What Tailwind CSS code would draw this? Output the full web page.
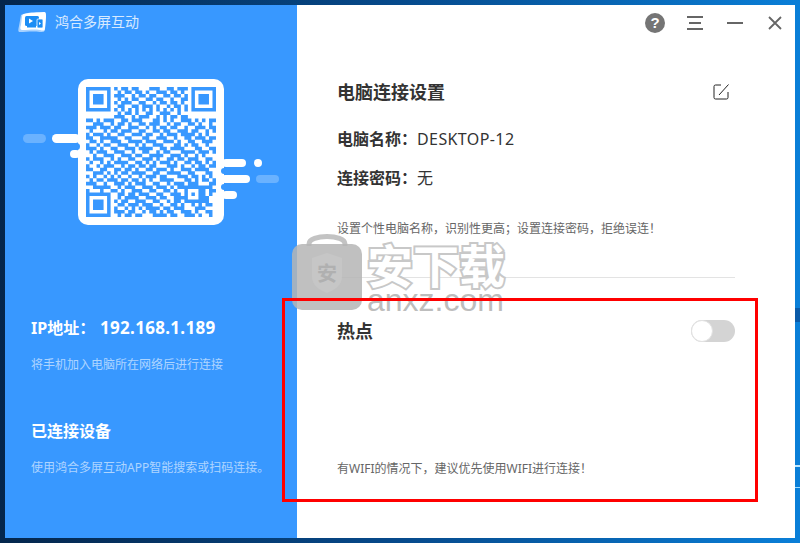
<!DOCTYPE html>
<html lang="zh">
<head>
    <meta charset="UTF-8">
    <title>鸿合多屏互动</title>
    <script src="https://cdn.jsdelivr.net/npm/@tailwindcss/browser@4"></script>
</head>
<body class="relative w-[800px] h-[543px] overflow-hidden p-[5px] bg-linear-to-r from-[#04264c] via-[#064a8c] to-[#0a7fd8] font-['Noto_Sans','Noto_Sans_CJK_SC',sans-serif]">
    <!-- desktop wallpaper streaks at the right edge -->
    <div class="absolute right-0 top-[465px] w-[5px] h-[2px] bg-[#bfe8ff]"></div>
    <div class="absolute right-0 top-[487px] w-[5px] h-[1px] bg-[#9fdcff]"></div>
    <div class="absolute right-0 top-[308px] w-[5px] h-[14px] bg-[#0a5aa8]"></div>

    <div class="flex w-[790px] h-[533px] bg-white">
        <!-- left panel -->
        <div class="w-[292px] h-full shrink-0 bg-[#3898ff]">
            <div class="h-[34px] pl-[13px] flex items-center gap-[9px]">
                <svg width="28" height="22" viewBox="0 0 28 22" class="shrink-0">
                    <path d="M3 4 C9 1 20 1 26 1 C28 1 28 3 28 6 L27 18 C27 21 25 21 22 21 C15 20 8 21 2 21 C0 21 0 19 1 15 Z" fill="#a8d2ff"/>
                    <path d="M6 3 C12 1 20 2 26 1 C28 1 28 3 28 6 L27 17 C27 20 25 20 22 19 C16 18 10 19 5 19 C2 19 2 17 3 14 L4 6 C4 4 5 3 6 3 Z" fill="#ffffff"/>
                    <rect x="7" y="5" width="14" height="10" rx="1.500" fill="#1b8df5"/>
                    <rect x="9" y="15" width="9" height="1.500" fill="#1b8df5"/>
                    <path d="M11 7.500 L15 10 L11 12.500 Z" fill="#ffffff"/>
                    <rect x="19" y="8" width="6" height="9" rx="1" fill="#1b8df5" stroke="#ffffff" stroke-width="0.8"/>
                    <path d="M21 11 L23 12.500 L21 14 Z" fill="#ffffff"/>
                </svg>
                <span class="text-[14px] leading-[20px] text-white/80">鸿合多屏互动</span>
            </div>

            <!-- QR card with its decoration -->
            <div class="relative mt-[40px] ml-[73px] w-[146px] h-[146px] rounded-[10px] bg-white flex items-center justify-center">
                <svg id="qr" width="130" height="130" viewBox="0 0 37 37"></svg>
                <div class="absolute left-[-26px] top-[55px] w-[28px] h-[9px] rounded-full bg-white"></div>
                <div class="absolute left-[-8px] top-[71px] w-[10px] h-[8px] rounded-full bg-white"></div>
                <div class="absolute left-[-6px] top-[64px] w-[8px] h-[7px] rounded-full bg-[#3898ff]"></div>
                <div class="absolute left-[-55px] top-[55px] w-[23px] h-[9px] rounded-full bg-white/25"></div>
                <div class="absolute left-[144px] top-[80px] w-[24px] h-[8px] rounded-full bg-white"></div>
                <div class="absolute left-[143px] top-[96px] w-[29px] h-[8px] rounded-full bg-white"></div>
                <div class="absolute left-[144px] top-[112px] w-[15px] h-[8px] rounded-full bg-white"></div>
                <div class="absolute left-[143px] top-[89px] w-[10px] h-[6px] rounded-full bg-[#3898ff]"></div>
                <div class="absolute left-[143px] top-[105px] w-[10px] h-[6px] rounded-full bg-[#3898ff]"></div>
                <div class="absolute left-[176px] top-[80px] w-[8px] h-[8px] rounded-full bg-white"></div>
                <div class="absolute left-[178px] top-[96px] w-[23px] h-[8px] rounded-full bg-white/25"></div>
            </div>

            <div class="pl-[26px]">
                <div class="mt-[91px] h-[24px] flex text-[16px] leading-[24px] font-bold text-white whitespace-nowrap"><span class="w-[69px]">IP地址：</span><span class="text-[17px] tracking-[0.3px]">192.168.1.189</span></div>
                <div class="mt-[16px] h-[18px] text-[12px] leading-[18px] text-white/60">将手机加入电脑所在网络后进行连接</div>
                <div class="mt-[45px] h-[24px] text-[16px] leading-[24px] font-bold text-white">已连接设备</div>
                <div class="mt-[16px] h-[18px] text-[12px] leading-[18px] text-white/60">使用鸿合多屏互动APP智能搜索或扫码连接。</div>
            </div>
        </div>

        <!-- right panel -->
        <div class="flex-1 pl-[40px] pr-[60px]">
            <div class="h-[34px] -mr-[47px] flex items-center justify-end pt-[2px]">
                <svg width="20" height="20" viewBox="0 0 20 20"><circle cx="10" cy="10" r="10" fill="#757575"/><text x="10" y="15" text-anchor="middle" font-size="15" font-weight="700" fill="#fff" font-family="Liberation Sans">?</text></svg>
                <svg width="16" height="14" viewBox="0 0 16 14" class="ml-[22px]"><path d="M0 1H16M2 7H14M0 13H16" stroke="#666" stroke-width="2"/></svg>
                <svg width="16" height="14" viewBox="0 0 16 14" class="ml-[24px]"><path d="M0 7H16" stroke="#666" stroke-width="2"/></svg>
                <svg width="14" height="14" viewBox="0 0 14 14" class="ml-[25px]"><path d="M1 1L13 13M13 1L1 13" stroke="#666" stroke-width="1.800"/></svg>
            </div>

            <div class="mt-[40px] h-[26px] flex items-center justify-between pr-[6px]">
                <h2 class="text-[18px] leading-[26px] font-bold text-[#333]">电脑连接设置</h2>
                <svg width="16" height="16" viewBox="0 0 16 16" fill="none" stroke="#222" stroke-width="1"><path d="M8 1H2.500A1.500 1.500 0 0 0 1 2.500V13.500A1.500 1.500 0 0 0 2.500 15H13.500A1.500 1.500 0 0 0 15 13.500V8"/><path d="M6 11L15.500 0.500"/></svg>
            </div>
            <div class="mt-[22px] h-[24px] flex text-[16px] leading-[24px] text-[#333]"><b class="w-[80px] font-bold">电脑名称：</b><span class="tracking-[0.4px]">DESKTOP-12</span></div>
            <div class="mt-[15px] h-[24px] flex text-[16px] leading-[24px] text-[#333]"><b class="w-[80px] font-bold">连接密码：</b><span>无</span></div>
            <p class="mt-[30px] h-[18px] text-[12px] leading-[18px] text-[#666] whitespace-nowrap">设置个性电脑名称，识别性更高；设置连接密码，拒绝误连！</p>
            <div class="mt-[39px] border-t border-[#e3e3e3]"></div>

            <div class="mt-[40px] h-[26px] flex items-center justify-between">
                <h2 class="text-[18px] leading-[26px] font-bold text-[#333]">热点</h2>
                <div class="w-[44px] h-[22px] rounded-full bg-[#d4d4d4]">
                    <div class="w-[22px] h-[22px] rounded-full bg-white border border-[#e2e2e2]"></div>
                </div>
            </div>
            <p class="mt-[116px] h-[18px] text-[12px] leading-[18px] text-[#666]">有WIFI的情况下，建议优先使用WIFI进行连接！</p>
        </div>
    </div>

    <!-- site watermark over the window -->
    <div class="absolute left-[292px] top-[230px] w-[216px] h-[86px] flex">
        <svg width="70" height="80" viewBox="0 0 70 80" class="shrink-0">
            <path d="M17 16 V14 C17 4 53 4 53 14 V16" fill="none" stroke="#bdbdbd" stroke-width="5" opacity="0.9"/>
            <rect x="0" y="14" width="70" height="66" rx="10" fill="#b5b5b5" fill-opacity="0.85"/>
            <path d="M20 28 L35 23 L50 28 V46 C50 56 42 60 35 63 C28 60 20 56 20 46 Z" fill="#c6c6c6"/>
            <text x="35" y="51" text-anchor="middle" font-size="20" font-weight="700" fill="#b0b0b0" font-family="Noto Sans CJK SC">安</text>
        </svg>
        <div class="ml-[5px] w-[141px] pt-[12px]">
            <div class="h-[46px] text-[46px] leading-[46px] font-bold whitespace-nowrap text-white [-webkit-text-stroke:4px_#c8c8c8] [paint-order:stroke_fill]">安下载</div>
            <div class="h-[24px] text-[32px] leading-[24px] text-[#bdbdbd] font-['Liberation_Sans',sans-serif]">anxz.com</div>
        </div>
    </div>

    <!-- red annotation box -->
    <div class="absolute left-[282px] top-[298px] w-[476px] h-[204px] border-[3px] border-[#ff0000]"></div>

    <script>
        // modules of the QR code, finder and alignment squares are added below
        const mid = [
            '01011011000111001101110',
            '00101101101001110110100',
            '01110010110110011011010',
            '00101011001101100100110',
            '01011100110010110110100',
            '00110011011101001011010',
            '01010101010101010101010',
            '00101101001100111001000',
            '01110010111001010110110'
        ];
        const rows = mid.map(m => '0000000' + m + '0000000');
        rows.push(
            '1101011100110111000110101001110101011',
            '0011100101101001101110010110011010010',
            '1110111011001110010101101100100111011',
            '0100010110111001100110110011101100101',
            '1011101001100111011001011101111010100',
            '1100111110011000110011100100110111011',
            '0110100111001111011100111010011001110',
            '1001011001110010100111000110101100100',
            '1110100110011101111001101111000110011',
            '0101110011100100110010110001111011101',
            '0010011100111011001111001110100101000',
            '1011100101001100111010011011011100110',
            '0100101011110011010101110100110110101',
            '1001011100101101101100011101001011011',
            '1100110011011010011011101001110111100',
            '0011101010110111100110011110011000110',
            '1010010101001001011101100011101101010',
            '0101101110110110101001111000110101101',
            '1110010011101011100110010111011100011',
            '0011111001011100111011101011100001110',
            '1000100110100111001100110100111111011'
        );
        for (const t of [
            '00110110111001100111000001101',
            '00101111001110110011100010110',
            '01011001110011001011011100110',
            '00110111011100100110100101011',
            '01001010101111011011100011100',
            '01110110010110101100111010011',
            '00101101100011110110011101001'
        ]) rows.push('0000000' + t);
        const isSet = (r, c) => rows[r] && rows[r][c] === '1';
        let d = '';
        const square = (x, y, w) => { d += `M${x} ${y}h${w}v${w}h${-w}z`; };
        const ring = (x, y, w) => { d += `M${x} ${y}h${w}v1h${-w}zM${x} ${y + w - 1}h${w}v1h${-w}zM${x} ${y + 1}h1v${w - 2}h-1zM${x + w - 1} ${y + 1}h1v${w - 2}h-1z`; };
        for (let r = 0; r < 37; r++) {
            for (let c = 0; c < 37; c++) {
                if (isSet(r, c) && !(r > 27 && r < 33 && c > 27 && c < 33)) square(c, r, 1);
            }
        }
        for (const [x, y] of [[0, 0], [30, 0], [0, 30]]) { ring(x, y, 7); square(x + 2, y + 2, 3); }
        ring(28, 28, 5); square(30, 30, 1);
        const path = document.createElementNS('http://www.w3.org/2000/svg', 'path');
        path.setAttribute('d', d);
        path.setAttribute('fill', '#3898ff');
        document.getElementById('qr').appendChild(path);
    </script>
</body>
</html>
